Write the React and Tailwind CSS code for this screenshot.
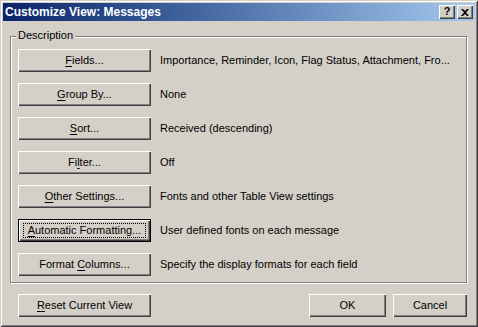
import React from "react";

const font = { fontFamily: "'Liberation Sans', Arial, sans-serif" };

function Btn({ children, w = "w-[133px]", focused = false }) {
  if (focused) {
    return (
      <div className={`${w} h-[23px] border border-black bg-[#d4d0c8] shadow-[inset_1px_1px_0_#fff,inset_-1px_-1px_0_#404040,inset_-2px_-2px_0_#808080] flex items-center justify-center shrink-0`}>
        <div className="border border-dotted border-black h-[15px] w-[123px] flex items-center justify-center leading-none">
          <span className="whitespace-nowrap">{children}</span>
        </div>
      </div>
    );
  }
  return (
    <div className={`${w} h-[23px] bg-[#d4d0c8] shadow-[inset_1px_1px_0_#fff,inset_-1px_-1px_0_#404040,inset_-2px_-2px_0_#808080] flex items-center justify-center shrink-0 leading-none`}>
      <span className="whitespace-nowrap">{children}</span>
    </div>
  );
}

const U = ({ children }) => <span className="underline underline-offset-2">{children}</span>;

const rows = [
  [<><U>F</U>ields...</>, "Importance, Reminder, Icon, Flag Status, Attachment, Fro..."],
  [<><U>G</U>roup By...</>, "None"],
  [<><U>S</U>ort...</>, "Received (descending)"],
  [<>Fi<U>l</U>ter...</>, "Off"],
  [<><U>O</U>ther Settings...</>, "Fonts and other Table View settings"],
  [<><U>A</U>utomatic Formatting...</>, "User defined fonts on each message", true],
  [<>Format <U>C</U>olumns...</>, "Specify the display formats for each field"],
];

export default function App() {
  return (
    <div
      style={font}
      className="w-[478px] h-[327px] bg-[#d4d0c8] p-[3px] text-[11px] text-black shadow-[inset_1px_1px_0_#d4d0c8,inset_-1px_-1px_0_#404040,inset_2px_2px_0_#fff,inset_-2px_-2px_0_#808080] flex flex-col"
    >
      <div className="h-[18px] bg-gradient-to-r from-[#0a246a] to-[#a6caf0] flex items-center pl-[2px] pr-[2px]">
        <span className="text-white font-bold text-[12px] flex-1 leading-none">Customize View: Messages</span>
        <div className="flex items-center">
          <div className="w-[16px] h-[14px] bg-[#d4d0c8] shadow-[inset_1px_1px_0_#fff,inset_-1px_-1px_0_#404040,inset_-2px_-2px_0_#808080] flex items-center justify-center font-bold text-[11px] leading-none pb-[1px]">?</div>
          <div className="w-[16px] h-[14px] ml-[2px] bg-[#d4d0c8] shadow-[inset_1px_1px_0_#fff,inset_-1px_-1px_0_#404040,inset_-2px_-2px_0_#808080] flex items-center justify-center">
            <svg width="8" height="7" viewBox="0 0 8 7">
              <path d="M0 0 L2 0 L4 2 L6 0 L8 0 L5 3.5 L8 7 L6 7 L4 5 L2 7 L0 7 L3 3.5 Z" fill="#000" />
            </svg>
          </div>
        </div>
      </div>

      <div className="px-[7px] pt-[15px] flex flex-col">
        <div className="relative w-[457px] h-[247px] border border-[#808080] shadow-[1px_1px_0_#fff,inset_1px_1px_0_#fff] px-[7px] pt-[12px] flex flex-col gap-[11px]">
          <span className="absolute left-[5px] top-[-7px] bg-[#d4d0c8] px-[2px] leading-none">Description</span>
          {rows.map(([label, desc, focused], i) => (
            <div key={i} className="flex items-center gap-[9px]">
              <Btn focused={!!focused}>{label}</Btn>
              <span className="whitespace-nowrap leading-none">{desc}</span>
            </div>
          ))}
        </div>

        <div className="flex items-center mt-[11px] pl-[8px]">
          <Btn><U>R</U>eset Current View</Btn>
          <div className="flex-1" />
          <Btn w="w-[77px]">OK</Btn>
          <div className="w-[7px]" />
          <Btn w="w-[74px]">Cancel</Btn>
          <div className="w-[1px]" />
        </div>
      </div>
    </div>
  );
}
